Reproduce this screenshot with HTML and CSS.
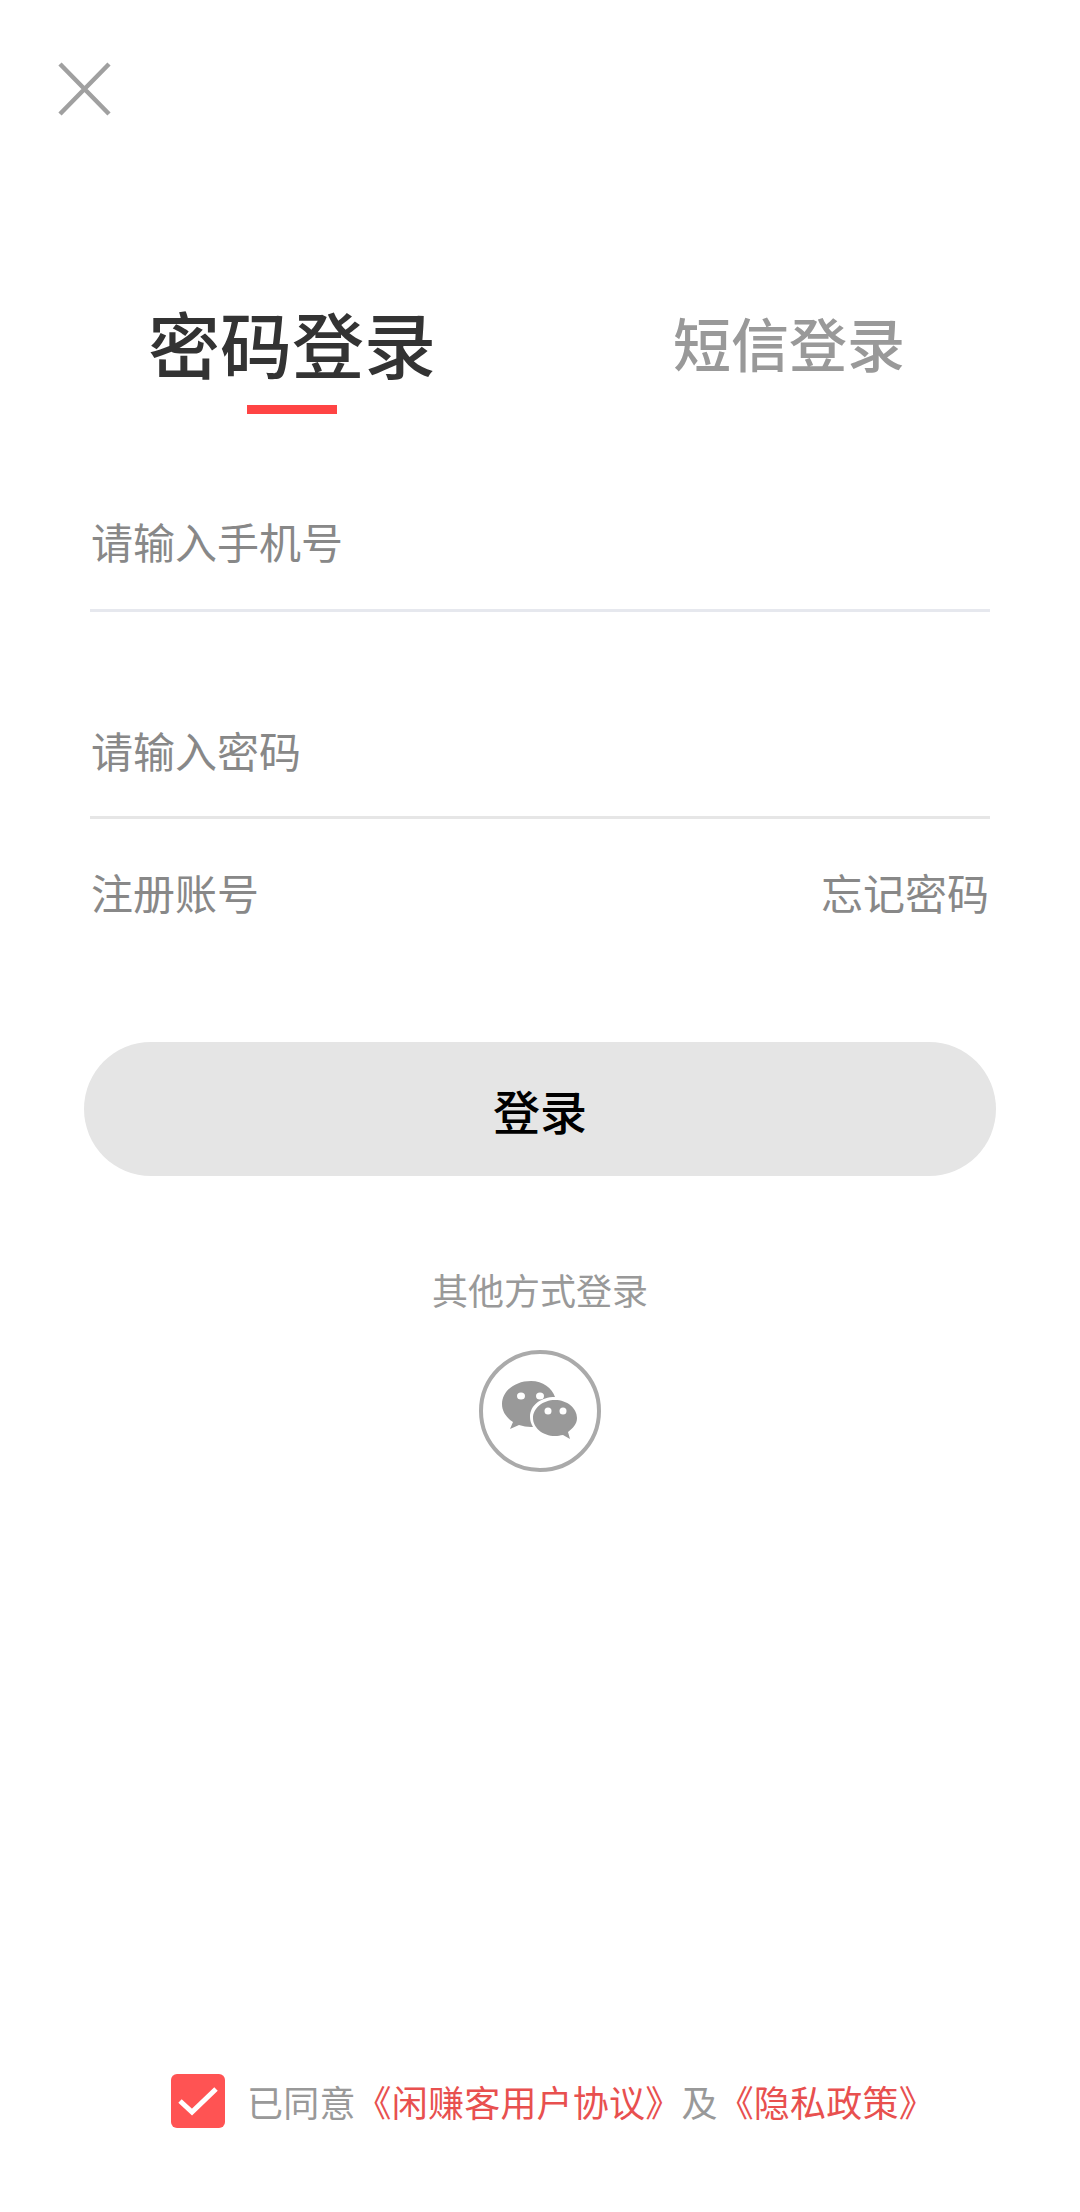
FILE: index.html
```html
<!DOCTYPE html>
<html lang="zh-CN">
<head>
    <meta charset="UTF-8">
    <meta name="viewport" content="width=device-width, initial-scale=1.0">
    <title>密码登录</title>
    <link rel="stylesheet" href="styles.css">
</head>
<body>
    <div class="page">
        <!-- 关闭 -->
        <button class="close" type="button" aria-label="关闭">
            <svg width="54" height="54" viewBox="0 0 54 54">
                <path d="M2 2 L51 52 M51 2 L2 52" stroke="#a0a0a0" stroke-width="4.500" fill="none"/>
            </svg>
        </button>

        <!-- 切换登录方式 -->
        <div class="tabs">
            <div class="tab tab-active">密码登录</div>
            <div class="tab">短信登录</div>
        </div>

        <form class="form">
            <div class="field">请输入手机号</div>
            <div class="field field-second">请输入密码</div>
            <div class="links">
                <span>注册账号</span>
                <span>忘记密码</span>
            </div>
            <button class="submit" type="button">登录</button>
        </form>

        <div class="other">
            <div class="other-title">其他方式登录</div>
            <div class="wechat">
                <svg width="76" height="60" viewBox="0 0 76 60">
                    <path d="M29 0 C13 0 0 10 0 23 C0 31 5 37 11 41 L8 48 L17 44 C21 45 25 46 29 46 L31 46 C29 43 28 39 28 36 C28 24 39 16 53 16 C50 7 41 0 29 0 Z" fill="#999"/>
                    <path d="M53 19 C41 19 31 27 31 37 C31 47 41 55 53 55 C56 55 58 54.500 61 54 L68 58 L66 51 C71 47 75 43 75 37 C75 27 65 19 53 19 Z" fill="#999"/>
                    <ellipse cx="19" cy="15" rx="4" ry="3.500" fill="#fff"/>
                    <ellipse cx="38" cy="15" rx="4" ry="3.500" fill="#fff"/>
                    <ellipse cx="46" cy="30" rx="3.500" ry="3.500" fill="#fff"/>
                    <ellipse cx="61" cy="30" rx="3.500" ry="3.500" fill="#fff"/>
                </svg>
            </div>
        </div>

        <div class="agree">
            <span class="check">
                <svg width="42" height="32" viewBox="0 0 42 32">
                    <path d="M3 16 L15 27 L39 4" stroke="#fff" stroke-width="5" fill="none"/>
                </svg>
            </span>
            <span class="agree-text">已同意<span class="red">《闲赚客用户协议》</span>及<span class="red">《隐私政策》</span></span>
        </div>
    </div>
</body>
</html>
```

FILE: styles.css
```css
* {
    box-sizing: border-box;
}
body {
    margin: 0;
    background-color: #fff;
    font-family: "Noto Sans CJK SC", "Noto Sans", sans-serif;
}
.page {
    width: 1080px;
    height: 2212px;
    display: flex;
    flex-direction: column;
    padding-top: 62px;
}
.close {
    width: 54px;
    height: 54px;
    margin-left: 58px;
    padding: 0;
    border: none;
    background: none;
}
.close svg {
    display: block;
}
.tabs {
    display: flex;
    gap: 237px;
    height: 122px;
    margin-top: 176px;
    padding-left: 148px;
}
.tab {
    font-size: 58px;
    font-weight: 500;
    line-height: 100px;
    color: #999;
}
.tab-active {
    position: relative;
    height: 122px;
    font-size: 72px;
    color: #333;
}
.tab-active::after {
    content: "";
    position: absolute;
    left: 99px;
    bottom: 0;
    width: 90px;
    height: 9px;
    background: #ff4444;
}
.form {
    display: flex;
    flex-direction: column;
    padding: 0 90px;
}
.field {
    height: 198px;
    padding: 97px 1px 0;
    border-bottom: 3px solid #e6e8ee;
    font-size: 42px;
    line-height: 60px;
    color: #888;
}
.field-second {
    height: 207px;
    padding-top: 108px;
    border-bottom-color: #e6e6e6;
}
.links {
    display: flex;
    justify-content: space-between;
    padding: 43px 1px 0;
    font-size: 42px;
    line-height: 60px;
    color: #888;
}
.submit {
    height: 134px;
    margin: 120px -6px 0;
    border: none;
    border-radius: 67px;
    background-color: #e5e5e5;
    color: #000;
    font-family: inherit;
    font-size: 47px;
    font-weight: 500;
    padding: 0;
}
.other {
    display: flex;
    flex-direction: column;
    align-items: center;
    margin-top: 88px;
}
.other-title {
    font-size: 36px;
    line-height: 50px;
    color: #999;
}
.wechat {
    width: 122px;
    height: 122px;
    margin-top: 36px;
    border: 4px solid #aaa;
    border-radius: 50%;
    display: flex;
    align-items: center;
    justify-content: center;
}
.agree {
    display: flex;
    align-items: center;
    margin-top: auto;
    margin-bottom: 84px;
    padding-left: 171px;
}
.check {
    width: 54px;
    height: 54px;
    border-radius: 6px;
    background-color: #ff5353;
    display: flex;
    align-items: center;
    justify-content: center;
}
.agree-text {
    margin-left: 22px;
    font-size: 36px;
    line-height: 54px;
    letter-spacing: 0.2px;
    color: #999;
    white-space: nowrap;
}
.red {
    color: #e8504f;
}
```
